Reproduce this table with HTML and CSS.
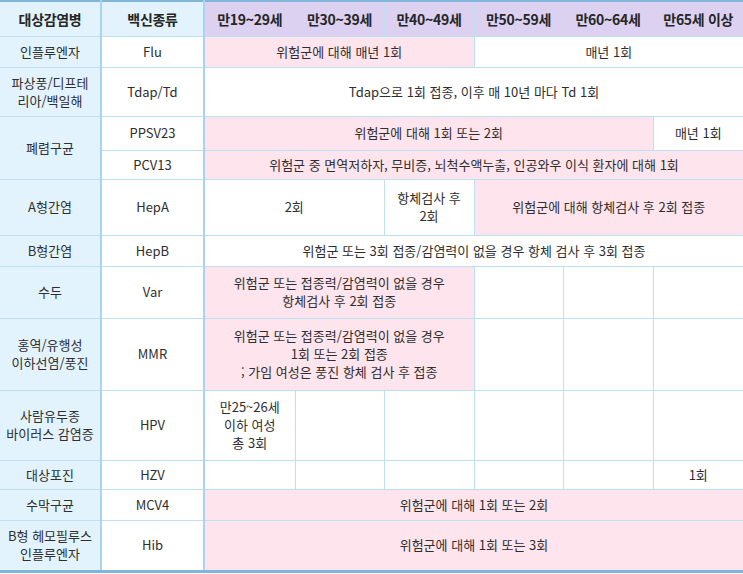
FILE: index.html
```html
<!DOCTYPE html>
<html lang="ko">
<head>
<meta charset="utf-8">
<title>성인 예방접종 일정</title>
<link rel="stylesheet" href="styles.css">
</head>
<body>
<table class="vax">
  <colgroup>
    <col class="c-dis"><col class="c-vac">
    <col class="c-age1"><col class="c-age2"><col class="c-age3"><col class="c-age4"><col class="c-age5"><col class="c-age6">
  </colgroup>
  <thead>
    <tr class="r-head">
      <th class="h-blue col-dis">대상감염병</th>
      <th class="h-blue col-vac">백신종류</th>
      <th class="h-purple">만19~29세</th>
      <th class="h-purple">만30~39세</th>
      <th class="h-purple">만40~49세</th>
      <th class="h-purple">만50~59세</th>
      <th class="h-purple">만60~64세</th>
      <th class="h-purple">만65세 이상</th>
    </tr>
  </thead>
  <tbody>
    <tr class="r31">
      <td class="dis">인플루엔자</td>
      <td class="vac">Flu</td>
      <td class="pink" colspan="3">위험군에 대해 매년 1회</td>
      <td colspan="3">매년 1회</td>
    </tr>
    <tr class="r49">
      <td class="dis">파상풍/디프테<br>리아/백일해</td>
      <td class="vac">Tdap/Td</td>
      <td colspan="6">Tdap으로 1회 접종, 이후 매 10년 마다 Td 1회</td>
    </tr>
    <tr class="r34">
      <td class="dis" rowspan="2">폐렴구균</td>
      <td class="vac">PPSV23</td>
      <td class="pink" colspan="5">위험군에 대해 1회 또는 2회</td>
      <td>매년 1회</td>
    </tr>
    <tr class="r29">
      <td class="vac">PCV13</td>
      <td class="pink" colspan="6">위험군 중 면역저하자, 무비증, 뇌척수액누출, 인공와우 이식 환자에 대해 1회</td>
    </tr>
    <tr class="r56">
      <td class="dis">A형간염</td>
      <td class="vac">HepA</td>
      <td colspan="2">2회</td>
      <td>항체검사 후<br>2회</td>
      <td class="pink" colspan="3">위험군에 대해 항체검사 후 2회 접종</td>
    </tr>
    <tr class="r31">
      <td class="dis">B형간염</td>
      <td class="vac">HepB</td>
      <td colspan="6">위험군 또는 3회 접종/감염력이 없을 경우 항체 검사 후 3회 접종</td>
    </tr>
    <tr class="r52">
      <td class="dis">수두</td>
      <td class="vac">Var</td>
      <td class="pink" colspan="3">위험군 또는 접종력/감염력이 없을 경우<br>항체검사 후 2회 접종</td>
      <td></td><td></td><td></td>
    </tr>
    <tr class="r72">
      <td class="dis">홍역/유행성<br>이하선염/풍진</td>
      <td class="vac">MMR</td>
      <td class="pink" colspan="3">위험군 또는 접종력/감염력이 없을 경우<br>1회 또는 2회 접종<br>; 가임 여성은 풍진 항체 검사 후 접종</td>
      <td></td><td></td><td></td>
    </tr>
    <tr class="r70">
      <td class="dis">사람유두종<br>바이러스 감염증</td>
      <td class="vac">HPV</td>
      <td>만25~26세<br>이하 여성<br>총 3회</td>
      <td></td><td></td><td></td><td></td><td></td>
    </tr>
    <tr class="r29">
      <td class="dis">대상포진</td>
      <td class="vac">HZV</td>
      <td></td><td></td><td></td><td></td><td></td>
      <td>1회</td>
    </tr>
    <tr class="r31">
      <td class="dis">수막구균</td>
      <td class="vac">MCV4</td>
      <td class="pink" colspan="6">위험군에 대해 1회 또는 2회</td>
    </tr>
    <tr class="r51 last">
      <td class="dis">B형 헤모필루스<br>인플루엔자</td>
      <td class="vac">Hib</td>
      <td class="pink" colspan="6">위험군에 대해 1회 또는 3회</td>
    </tr>
  </tbody>
</table>
</body>
</html>
```

FILE: styles.css
```css
html, body {
  margin: 0;
  padding: 0;
  background: #ffffff;
}

.vax {
  width: 743px;
  table-layout: fixed;
  border-collapse: collapse;
  font-family: "Noto Sans CJK KR", "Noto Sans", sans-serif;
  font-size: 13px;
  line-height: 18px;
  letter-spacing: 0;
  color: #2e2e2e;
  border-top: 2px solid #82b5da;
  border-bottom: 3px solid #82b5da;
}

.c-dis { width: 101px; }
.c-vac { width: 103px; }
.c-age1 { width: 91px; }
.c-age2 { width: 89px; }
.c-age3 { width: 90px; }
.c-age4 { width: 89px; }
.c-age5 { width: 90px; }
.c-age6 { width: 90px; }

.vax th,
.vax td {
  border: 1px solid #bfdff3;
  padding: 0 2px;
  text-align: center;
  vertical-align: middle;
  background: #ffffff;
}

.vax tr > :first-child { border-left: none; }
.vax tr > :last-child { border-right: none; }

.vax th {
  font-weight: 700;
  font-size: 14px;
  letter-spacing: -0.3px;
  color: #262626;
}

.h-blue { background: #e3f3fd !important; }
.h-purple { background: #dcd1f1 !important; }

.col-dis, .dis { border-right: 2px solid #a9d3ef !important; }
.col-vac, .vac { border-right: 2px solid #a9d3ef !important; }

.dis { background: #e3f3fd !important; }
.pink { background: #fee4ed !important; }

.r-head { height: 35px; }
.r29 { height: 29px; }
.r31 { height: 31px; }
.r34 { height: 34px; }
.r49 { height: 49px; }
.r51 { height: 51px; }
.r52 { height: 52px; }
.r56 { height: 56px; }
.r70 { height: 70px; }
.r72 { height: 72px; }
```
